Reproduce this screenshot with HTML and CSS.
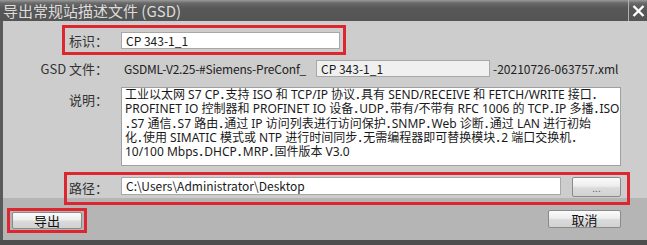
FILE: index.html
```html
<!DOCTYPE html>
<html lang="zh-CN">
<head>
    <meta charset="UTF-8">
    <title>导出常规站描述文件 (GSD)</title>
    <link rel="stylesheet" href="styles.css">
</head>
<body>
<div class="dialog">
    <!-- 标题栏 -->
    <div class="titlebar">
        <span class="title">导出常规站描述文件 (GSD)</span>
        <span class="close">
            <svg width="13" height="12" viewBox="0 0 13 12">
                <path d="M1.5 1 L11.5 11 M11.5 1 L1.5 11" stroke="#fff" stroke-width="2.4" fill="none"/>
            </svg>
        </span>
    </div>

    <!-- 表单区域 -->
    <div class="panel">
        <div class="row row-id mark">
            <label class="lbl">标识：</label>
            <div class="field field-id">CP 343-1_1</div>
        </div>

        <div class="row row-gsd">
            <label class="lbl">GSD 文件：</label>
            <span class="gsd-prefix">GSDML-V2.25-#Siemens-PreConf_</span>
            <div class="field field-gsd">CP 343-1_1</div>
            <span class="gsd-suffix">-20210726-063757.xml</span>
        </div>

        <div class="row row-desc">
            <label class="lbl">说明：</label>
            <div class="desc">工业以太网 S7 CP．支持 ISO 和 TCP/IP 协议．具有 SEND/RECEIVE 和 FETCH/WRITE 接口．<br>PROFINET IO 控制器和 PROFINET IO 设备．UDP．带有/不带有 RFC 1006 的 TCP．IP 多播．ISO<br>．S7 通信．S7 路由．通过 IP 访问列表进行访问保护．SNMP．Web 诊断．通过 LAN 进行初始<br>化．使用 SIMATIC 模式或 NTP 进行时间同步．无需编程器即可替换模块．2 端口交换机．<br>10/100 Mbps．DHCP．MRP．固件版本 V3.0</div>
        </div>

        <div class="row row-path mark">
            <label class="lbl">路径：</label>
            <div class="field field-path">C:\Users\Administrator\Desktop</div>
            <button class="btn btn-browse">...</button>
        </div>
    </div>

    <!-- 底部按钮 -->
    <div class="footer">
        <span class="mark-box"><button class="btn btn-export">导出</button></span>
        <button class="btn btn-cancel">取消</button>
    </div>
    <div class="bottom-strip"></div>
</div>
</body>
</html>
```

FILE: styles.css
```css
body {
    margin: 0;
    font-family: "Noto Sans CJK SC", sans-serif;
    font-size: 12px;
    color: #1a1a1a;
    background: #b5b5b5;
}
.dialog {
    width: 647px;
    height: 245px;
    overflow: hidden;
}
.titlebar {
    height: 21px;
    display: flex;
    align-items: center;
    justify-content: space-between;
    background: linear-gradient(#9a9a9a 0, #6a6a6a 3px, #585858 8px, #545454 100%);
}
.title {
    padding-left: 3px;
    font-size: 15px;
    color: #dcdcdc;
    line-height: 21px;
}
.close {
    width: 18px;
    height: 21px;
    border-left: 1px solid #b0b0b0;
    display: flex;
    align-items: center;
    justify-content: center;
}
.panel {
    height: 170px;
    padding: 7px 0 0 62px;
    background: #cdcdcd;
    border-left: 3px solid #5a5a5a;
}
.row {
    display: flex;
    align-items: center;
}
.lbl {
    width: 43px;
    padding-right: 13px;
    flex-shrink: 0;
    text-align: right;
    font-size: 13px;
    color: #333;
    white-space: nowrap;
}
.mark {
    outline: 3px solid #dc2730;
}
.field {
    box-sizing: border-box;
    background: #fff;
    border: 1px solid #a8a8a8;
    padding-left: 4px;
    font-size: 12px;
    white-space: nowrap;
    overflow: hidden;
}
.row-id {
    width: 278px;
    height: 24px;
}
.field-id {
    width: 219px;
    height: 17px;
    line-height: 15px;
}
.row-gsd {
    margin-top: 8px;
    margin-left: -30px;
    height: 17px;
}
.row-gsd .lbl {
    width: 73px;
}
.gsd-prefix {
    padding-left: 3px;
    width: 192px;
    flex-shrink: 0;
    letter-spacing: -0.2px;
    white-space: nowrap;
    color: #222;
}
.field-gsd {
    width: 174px;
    height: 17px;
    line-height: 15px;
    background: #f0f0f0;
}
.gsd-suffix {
    padding-left: 3px;
    color: #222;
    white-space: nowrap;
}
.row-desc {
    margin-top: 10px;
    align-items: flex-start;
}
.row-desc .lbl {
    padding-top: 3px;
}
.desc {
    box-sizing: border-box;
    width: 500px;
    height: 79px;
    background: #fff;
    border: 1px solid #a0a0a0;
    padding: 0 2px 0 3px;
    font-family: "Noto Sans", "Noto Sans CJK SC", sans-serif;
    line-height: 14.3px;
    font-size: 12px;
    font-feature-settings: "halt";
    white-space: nowrap;
    overflow: hidden;
}
.row-path {
    outline-offset: -2px;
    margin-top: 7px;
    width: 564px;
    height: 31px;
    align-items: flex-start;
    padding-top: 4px;
    box-sizing: border-box;
}
.row-path .lbl {
    padding-top: 1px;
}
.field-path {
    width: 440px;
    height: 18px;
    line-height: 16px;
}
.btn {
    box-sizing: border-box;
    border: 1px solid #8a8a8a;
    border-radius: 2px;
    background: linear-gradient(#fbfbfb, #ededed 45%, #dadada 55%, #d2d2d2);
    font-family: "Noto Sans CJK SC", sans-serif;
    font-size: 13px;
    color: #111;
    padding: 0;
    line-height: 15px;
}
.btn-browse {
    margin-left: 11px;
    width: 49px;
    height: 20px;
    font-size: 10px;
    color: #666;
}
.footer {
    height: 42px;
    box-sizing: border-box;
    padding: 10px 26px 0 4px;
    border-left: 3px solid #5a5a5a;
    background: #b5b5b5;
    display: flex;
    justify-content: space-between;
    align-items: flex-start;
}
.mark-box {
    display: flex;
    border: 3px solid #dc2730;
    padding: 1px 2px;
}
.btn-export {
    width: 70px;
    height: 17px;
}
.btn-cancel {
    margin-top: 2px;
    width: 73px;
    height: 18px;
}
.bottom-strip {
    height: 5px;
    background: #4e4e4e;
}
```
